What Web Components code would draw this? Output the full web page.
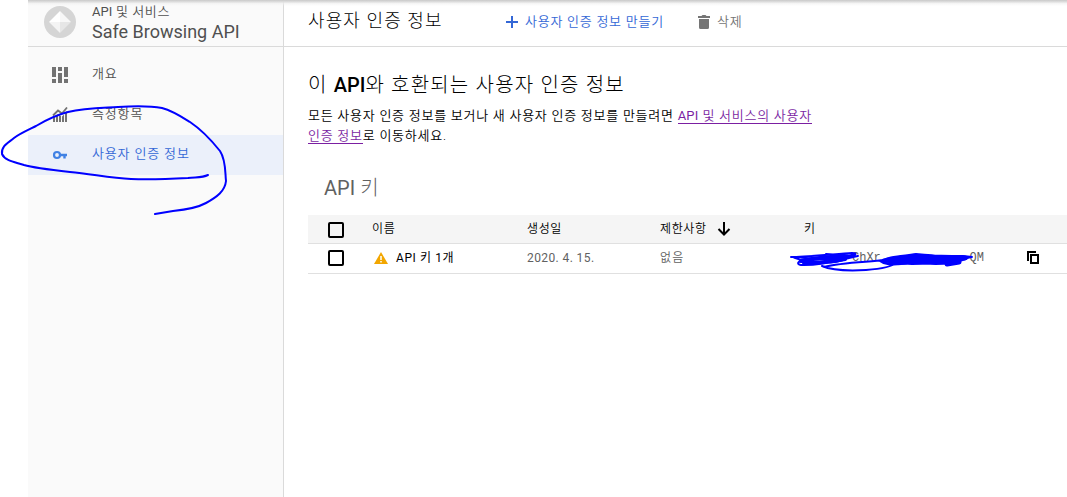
<!DOCTYPE html>
<html lang="ko">
<head>
<meta charset="utf-8">
<title>사용자 인증 정보</title>
<style>
  body {
    margin: 0;
    width: 1067px;
    height: 497px;
    overflow: hidden;
    background: #fff;
    font-family: Roboto, "Noto Sans CJK KR", sans-serif;
    font-size: 13px;
    letter-spacing: 0.75px;
    color: #000;
  }
</style>
</head>
<body>
<console-app></console-app>
<script>
class ConsoleApp extends HTMLElement {
  connectedCallback() {
    this.attachShadow({ mode: 'open' });
    this.shadowRoot.innerHTML = `
      <style>
        :host {
          display: flex;
          position: relative;
          height: 497px;
          padding-left: 28px;
          box-sizing: border-box;
        }
        .shade {
          position: absolute;
          top: 0;
          left: 28px;
          right: 0;
          height: 6px;
          background: linear-gradient(#c9c9c9, #dedede 30%, rgba(240, 240, 240, 0.6) 60%, rgba(255, 255, 255, 0));
        }
        main { flex: 1; }
        .content { padding: 26px 0 0 24px; }
        h2 {
          margin: 0;
          font-size: 20px;
          line-height: 24px;
          font-weight: 300;
          letter-spacing: 1.2px;
        }
        h2 b { font-weight: 500; letter-spacing: 0; }
        p { margin: 9px 0 0; line-height: 20px; font-weight: 350; width: 530px; white-space: nowrap; }
        a { color: #7b1fa2; border-bottom: 1px solid #7b1fa2; }
        a b { font-weight: 400; letter-spacing: 0.2px; }
        h3 {
          margin: 30px 0 0 16px;
          font-size: 20px;
          line-height: 24px;
          font-weight: 300;
          letter-spacing: 0.3px;
          color: #616161;
        }
        h3 b { font-weight: 400; letter-spacing: 0; }
        key-table { margin-top: 15px; }
      </style>
      <side-nav></side-nav>
      <main>
        <page-bar></page-bar>
        <div class="content">
          <h2>이 <b>API</b>와 호환되는 사용자 인증 정보</h2>
          <p>모든 사용자 인증 정보를 보거나 새 사용자 인증 정보를 만들려면 <a><b>API</b> 및 서비스의 사용자</a><br><a>인증 정보</a>로 이동하세요.</p>
          <h3><b>API</b> 키</h3>
          <key-table></key-table>
        </div>
      </main>
      <div class="shade"></div>
      <pen-marks></pen-marks>
    `;
  }
}

class SideNav extends HTMLElement {
  connectedCallback() {
    this.attachShadow({ mode: 'open' });
    this.shadowRoot.innerHTML = `
      <style>
        :host {
          display: block;
          width: 255px;
          background: #fafafa;
          border-right: 1px solid #dadada;
        }
        header {
          display: flex;
          align-items: flex-start;
          height: 47px;
          box-sizing: border-box;
          padding: 4px 0 0 16px;
          border-bottom: 1px solid #dadada;
          margin-bottom: 8px;
          color: #505050;
        }
        header svg { margin: 2px 16px 0 0; }
        .parent { line-height: 16px; font-weight: 350; letter-spacing: 0.6px; }
        .parent b { font-weight: 400; letter-spacing: 0; }
        .title { line-height: 23px; font-size: 18px; letter-spacing: 0; }
      </style>
      <header>
        <svg width="32" height="32" viewBox="0 0 32 32">
          <circle cx="16" cy="16" r="16" fill="#d5d5d5"/>
          <path d="M16 5v11H5z" fill="#fff"/>
          <path d="M16 5v11h11z" fill="#f7f7f7"/>
          <path d="M5 16h11v11z" fill="#f4f4f4"/>
          <path d="M27 16H16v11z" fill="#e6e6e6"/>
        </svg>
        <div>
          <div class="parent"><b>API</b> 및 서비스</div>
          <div class="title">Safe Browsing API</div>
        </div>
      </header>
      <nav-item>
        <svg slot="icon" width="16" height="16" viewBox="0 0 16 16" fill="#737373">
          <path d="M0 0h4v10H0zM0 12h4v4H0zM6 0h4v4H6zM6 6h4v10H6zM12 0h4v10h-4zM12 12h4v4h-4z"/>
        </svg>개요
      </nav-item>
      <nav-item>
        <svg slot="icon" width="16" height="16" viewBox="0 0 16 16">
          <path d="M1 8.500l5-5 4 3 5-6" fill="none" stroke="#737373" stroke-width="1.800"/>
          <path d="M1 11l2-1.500V15H1zM4 9l2-2v8H4zM7 8l2 1v6H7zM10 9.500l2-2V15h-2zM13 6l2-2v11h-2z" fill="#737373"/>
        </svg>측정항목
      </nav-item>
      <nav-item selected>
        <svg slot="icon" width="16" height="16" viewBox="0 0 16 16" fill="none" stroke="#4182e4">
          <circle cx="5" cy="8" r="3" stroke-width="2.200"/>
          <path d="M8 8h7M12.500 8v3.400" stroke-width="2.400"/>
        </svg>사용자 인증 정보
      </nav-item>
    `;
  }
}

class NavItem extends HTMLElement {
  connectedCallback() {
    this.attachShadow({ mode: 'open' });
    this.shadowRoot.innerHTML = `
      <style>
        :host {
          display: flex;
          align-items: center;
          height: 40px;
          padding-left: 24px;
          color: #505050;
          font-weight: 350;
          letter-spacing: 0.85px;
        }
        :host([selected]) { background: #ebf0fa; color: #3367d6; }
        .icon { display: flex; margin-right: 24px; }
        .label { line-height: 20px; padding-bottom: 3px; }
      </style>
      <span class="icon"><slot name="icon"></slot></span>
      <span class="label"><slot></slot></span>
    `;
  }
}

class PageBar extends HTMLElement {
  connectedCallback() {
    this.attachShadow({ mode: 'open' });
    this.shadowRoot.innerHTML = `
      <style>
        :host {
          display: flex;
          align-items: center;
          height: 47px;
          box-sizing: border-box;
          padding: 0 0 4px 24px;
          border-bottom: 1px solid #dadada;
        }
        h1 {
          margin: 0;
          width: 197px;
          font-size: 18px;
          line-height: 24px;
          font-weight: 300;
          letter-spacing: 1.1px;
          white-space: nowrap;
        }
        .action { display: flex; align-items: center; padding-bottom: 1px; font-weight: 350; }
        .create { width: 192px; color: #3367d6; }
        .remove { color: #757575; }
        svg { margin-right: 6px; position: relative; top: 1px; }
      </style>
      <h1>사용자 인증 정보</h1>
      <span class="action create">
        <svg width="14" height="14" viewBox="0 0 14 14"><path d="M7 1v12M1 7h12" stroke="#3367d6" stroke-width="2"/></svg>
        사용자 인증 정보 만들기
      </span>
      <span class="action remove">
        <svg width="14" height="16" viewBox="0 0 14 16" fill="#757575"><path d="M1 2h3.500l1-1h3l1 1H13v2H1zM2 5h10v8.500q0 1.500-1.500 1.500h-7Q2 15 2 13.500z"/></svg>
        삭제
      </span>
    `;
  }
}

class KeyTable extends HTMLElement {
  connectedCallback() {
    this.attachShadow({ mode: 'open' });
    this.shadowRoot.innerHTML = `
      <style>
        :host { display: block; }
        .row {
          display: grid;
          grid-template-columns: 64px 155px 133px 144px 222px 1fr;
          align-items: center;
          height: 27px;
          padding-bottom: 2px;
          border-bottom: 1px solid #e0e0e0;
          font-size: 12px;
        }
        .head { height: 28px; padding: 1px 0 0; box-sizing: border-box; background: #f5f5f5; letter-spacing: 0.6px; font-weight: 350; height: 29px; }
        .row > span { display: flex; align-items: center; line-height: 18px; white-space: nowrap; }
        .head > span { padding-bottom: 2px; }
        .box { width: 12px; height: 12px; border: 2px solid #000; border-radius: 2px; margin-left: 20px; }
        .head .box { margin-top: 1px; }
        .name { letter-spacing: 0.6px; }
        .name svg { margin: 0 7px 0 1px; }
        .muted { color: #616161; font-weight: 350; }
        .muted.date { font-weight: 400; letter-spacing: 0.4px; }
        .none { letter-spacing: 1.2px; }
        .key { font-family: "Liberation Mono", monospace; letter-spacing: 0; color: #616161; }
        .head svg { margin-left: 10px; }
      </style>
      <div class="row head">
        <i class="box"></i>
        <span>이름</span>
        <span>생성일</span>
        <span>제한사항
          <svg width="14" height="14" viewBox="0 0 14 14" fill="none" stroke="#000" stroke-width="2"><path d="M7 0v12M1.500 7L7 12.500 12.500 7"/></svg>
        </span>
        <span>키</span>
      </div>
      <div class="row">
        <i class="box"></i>
        <span class="name">
          <svg width="16" height="14" viewBox="0 0 16 14"><path d="M8 1l7 12H1z" fill="#f2a600"/><path d="M8 5v4M8 10v1.500" stroke="#fff" stroke-width="1.500"/></svg>
          API 키 1개
        </span>
        <span class="muted date">2020. 4. 15.</span>
        <span class="muted none">없음</span>
        <span class="key"><key-text></key-text></span>
        <svg width="14" height="16" viewBox="0 0 14 16" fill="none" stroke="#000" stroke-width="2"><path d="M5 5h7v8H5zM2 11V2h8"/></svg>
      </div>
    `;
  }
}

// only the parts of the key that stay readable around the scribble
class KeyText extends HTMLElement {
  connectedCallback() {
    this.attachShadow({ mode: 'open' });
    this.shadowRoot.innerHTML = `
      <style>
        :host { display: flex; width: 180px; justify-content: space-between; }
        .mid { margin-left: 48px; }
      </style>
      <span class="mid">ChXr</span><span>QM</span>
    `;
  }
}

class PenMarks extends HTMLElement {
  connectedCallback() {
    this.attachShadow({ mode: 'open' });
    this.shadowRoot.innerHTML = `
      <style>
        :host { position: absolute; inset: 0; pointer-events: none; }
        svg { display: block; }
      </style>
      <svg width="1067" height="497" fill="none" stroke="#00f" stroke-width="2" stroke-linecap="round" stroke-linejoin="round">
        <path d="M208 175C202 178 196 177 188 178C170 179 150 180 131 179C110 178 92 174 70 172C52 170 34 168 24 165C15 162 5 161 2 154C1 146 8 143 14 138C19 134 28 130 36 126C46 120 56 115 68 112C85 108 102 108 118 107C134 106 151 106 162 108C173 111 182 117 190 122C202 130 212 141 220 151C226 160 225 172 226 181C225 191 217 197 206 203C197 208 183 210 173 211L155 214"/>
        <path d="M791 257C805 257 836 254 852 253C862 254 848 256 840 258C820 262 798 256 793 257C798 260 806 261 810 263C830 263 848 258 858 256C846 258 824 266 801 265C796 264 798 261 804 260C816 258 840 256 846 259C832 265 809 262 803 260M826 254L855 256M824 267C842 262 870 262 884 260C900 257 910 256 922 255C940 256 952 256 963 256L972 257C960 259 944 262 930 262C916 262 899 262 886 261C880 258 900 256 916 254C930 255 949 257 958 260C944 265 921 262 901 264C890 265 884 263 892 260C914 257 940 257 956 258M822 266C831 270 848 271 866 270C879 269 892 267 895 263M880 261C887 267 900 263 912 264C928 263 938 265 950 263C960 261 968 259 969 257"/>
        <path d="M801 261Q827 256 846 257M804 263Q825 263 845 259" stroke-width="4"/>
        <path d="M884 261Q906 256 924 258Q943 259 965 258M892 263Q928 259 958 259M947 264L959 262" stroke-width="5"/>
      </svg>
    `;
  }
}

customElements.define('nav-item', NavItem);
customElements.define('side-nav', SideNav);
customElements.define('page-bar', PageBar);
customElements.define('key-text', KeyText);
customElements.define('key-table', KeyTable);
customElements.define('pen-marks', PenMarks);
customElements.define('console-app', ConsoleApp);
</script>
</body>
</html>
